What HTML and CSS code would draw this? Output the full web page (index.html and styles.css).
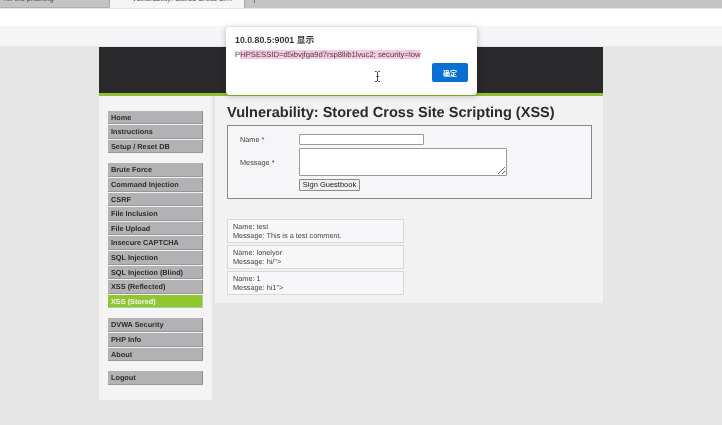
FILE: index.html
```html
<!DOCTYPE html>
<html lang="en">
<head>
    <meta charset="UTF-8">
    <title>Vulnerability: Stored Cross Site Scripting (XSS)</title>
    <link rel="stylesheet" href="styles.css">
</head>
<body>
    <div class="tab-bar">
        <div class="tab tab-other"><span class="tab-title">ror the phishing</span><span class="tab-close">×</span></div>
        <div class="tab tab-active"><span class="tab-title">Vulnerability: Stored Cross Si…</span><span class="tab-close">×</span></div>
        <div class="tab-new"></div>
    </div>
    <div class="address-bar"></div>
    <div class="bookmark-bar"></div>

    <div class="container">
        <div class="header"></div>
        <div class="columns">
            <div class="sidebar">
                <ul class="menu">
                    <li>Home</li>
                    <li>Instructions</li>
                    <li>Setup / Reset DB</li>
                </ul>
                <ul class="menu">
                    <li>Brute Force</li>
                    <li>Command Injection</li>
                    <li>CSRF</li>
                    <li>File Inclusion</li>
                    <li>File Upload</li>
                    <li>Insecure CAPTCHA</li>
                    <li>SQL Injection</li>
                    <li>SQL Injection (Blind)</li>
                    <li>XSS (Reflected)</li>
                    <li class="selected">XSS (Stored)</li>
                </ul>
                <ul class="menu">
                    <li>DVWA Security</li>
                    <li>PHP Info</li>
                    <li>About</li>
                </ul>
                <ul class="menu">
                    <li>Logout</li>
                </ul>
            </div>
            <div class="main">
                <h1>Vulnerability: Stored Cross Site Scripting (XSS)</h1>
                <div class="guestbook">
                    <div class="form-row">
                        <label class="form-label">Name *</label>
                        <input class="name-input" type="text">
                    </div>
                    <div class="form-row">
                        <label class="form-label">Message *</label>
                        <textarea class="message-input"></textarea>
                    </div>
                    <div class="form-row">
                        <span class="form-label"></span>
                        <button class="sign-button">Sign Guestbook</button>
                    </div>
                </div>
                <div class="comments">
                    <div class="comment">Name: test<br>Message: This is a test comment.</div>
                    <div class="comment">Name: lonelyor<br>Message: hi/"&gt;</div>
                    <div class="comment">Name: 1<br>Message: hi1"&gt;</div>
                </div>
            </div>
        </div>
    </div>

    <div class="alert">
        <div class="alert-title">10.0.80.5:9001 显示</div>
        <div class="alert-text">P<span class="alert-mark">HPSESSID=d5ibvjfga9d7rsp8llib1lvuc2; security=low</span></div>
        <div class="alert-actions">
            <button class="alert-ok">确定</button>
        </div>
        <svg class="cursor" width="7" height="11" viewBox="0 0 7 11">
            <path d="M1 .5h1.500l1 1 1-1H6M3.500 1.500v8M1 10.500h1.500l1-1 1 1H6M2.200 5.500h2.600" fill="none" stroke="#333" stroke-width=".9"/>
        </svg>
    </div>
</body>
</html>
```

FILE: styles.css
```css
* {
    box-sizing: border-box;
}

html, body {
    height: 100%;
}

html {
    background-color: #e6e6e6;
}

body {
    margin: 0;
    overflow: hidden;
    font-family: "Liberation Sans", Arial, sans-serif;
    color: #2b2b2b;
    text-rendering: geometricPrecision;
    filter: blur(0.4px); /* the shot is a soft video frame */
}

/* browser chrome, cut off at the top of the shot */
.tab-bar {
    display: flex;
    height: 9px;
    background-color: #c4c4c4;
    border-bottom: 1px solid #e4e4e6;
    overflow: hidden;
}

.tab {
    display: flex;
    justify-content: space-between;
    height: 8px;
    font-size: 7.200px;
    line-height: 8px;
    color: #444;
    white-space: nowrap;
    overflow: hidden;
}

.tab-other {
    width: 110px;
    padding: 0 8px 0 4px;
    border-right: 1px solid #aaa;
    border-bottom: 1px solid #b0b0b0;
    border-bottom-right-radius: 3px;
}

.tab-active {
    width: 135px;
    padding: 0 9px 0 22px;
    background-color: #f5f5f7;
    border-right: 1px solid #aaa;
}

.tab-title, .tab-close {
    display: block;
    margin-top: -5px;
    flex-shrink: 0;
}

.tab-new {
    width: 1px;
    height: 3px;
    margin-left: 9px;
    background-color: #777;
}

.address-bar {
    height: 17px;
    background-color: #fff;
}

.bookmark-bar {
    height: 20px;
    background-color: #f5f5f7;
}

.container {
    width: 504px;
    margin-left: 99px;
    margin-top: 1px;
    will-change: transform;
}

.header {
    height: 49px;
    background-color: #2a2a2c;
    border-bottom: 3px solid #8fc031;
}

.columns {
    display: flex;
    align-items: flex-start;
}

.sidebar {
    width: 113px;
    height: 304px;
    padding-top: 14.500px;
    background-color: #f4f4f4;
}

.menu {
    list-style: none;
    margin: 0 0 10.100px 9px;
    padding: 0;
    width: 95px;
}

.menu li {
    height: 13.600px;
    margin-bottom: 1px;
    padding-left: 3px;
    background-color: #b3b1b3;
    border-right: 1px solid #8f8f8f;
    border-bottom: 1px solid #97979c;
    font-size: 7.300px;
    font-weight: bold;
    line-height: 13px;
    color: #2b2b2b;
}

.menu li.selected {
    background-color: #8fc72c;
    border-color: #a8c8c0;
    color: #f4f4f4;
}

.main {
    width: 388px;
    height: 207px;
    margin-left: 3px;
    padding: 7px 11px 0 12px;
    background-color: #f2f2f2;
}

h1 {
    margin: 0 0 1px;
    font-size: 14.550px;
    line-height: 21px;
    font-weight: bold;
    color: #2b2b2b;
}

.guestbook {
    height: 74px;
    padding: 8px 0 0 12px;
    background-color: #f6f6f8;
    border: 1px solid #888;
}

.form-row {
    display: flex;
    align-items: flex-start;
    margin-bottom: 3px;
}

.form-label {
    width: 59px;
    flex-shrink: 0;
    font-size: 7.300px;
    line-height: 11px;
    color: #444;
}

.form-row:nth-child(2) .form-label {
    padding-top: 9px;
}

.name-input {
    display: block;
    width: 125px;
    height: 11px;
    padding: 0;
    background-color: #fff;
    border: 1px solid #9a9a9a;
    border-radius: 1px;
}

.message-input {
    display: block;
    width: 208px;
    height: 28px;
    padding: 0;
    background-color: #fff;
    border: 1px solid #9a9a9a;
    border-radius: 1px;
}

.sign-button {
    width: 61px;
    height: 12px;
    padding: 0;
    background-color: #efefef;
    border: 1px solid #8a8a8a;
    border-radius: 1px;
    font-family: inherit;
    font-size: 7.500px;
    line-height: 10px;
    color: #222;
}

.comments {
    margin-top: 20px;
}

.comment {
    width: 177px;
    height: 23.500px;
    margin-bottom: 2.500px;
    padding: 3px 5px 0;
    background-color: #f7f7f9;
    border: 1px solid #d8d8d8;
    font-size: 7.300px;
    line-height: 8.500px;
    color: #444;
}

/* alert dialog sits on top of the page */
.alert {
    position: absolute;
    top: 27px;
    left: 226px;
    width: 251px;
    height: 68px;
    padding: 8px 9px 0;
    background-color: #fff;
    border-radius: 4px;
    box-shadow: 0 1px 6px rgba(0, 0, 0, 0.25);
    will-change: transform;
}

.alert-title {
    font-family: "Liberation Sans", "Noto Sans CJK SC", sans-serif;
    font-size: 8.800px;
    line-height: 11px;
    font-weight: bold;
    color: #333;
}

.alert-text {
    margin-top: 4px;
    font-size: 7.700px;
    line-height: 9px;
    color: #444;
}

.alert-mark {
    background-color: #f9c8de;
}

.alert-actions {
    display: flex;
    justify-content: flex-end;
    margin-top: 4px;
}

.alert-ok {
    width: 36px;
    height: 19px;
    padding: 0;
    background-color: #0a6fd2;
    border: none;
    border-radius: 2px;
    font-family: "Noto Sans CJK SC", sans-serif;
    font-size: 7px;
    font-weight: bold;
    color: #fff;
}

.cursor {
    position: absolute;
    left: 148px;
    top: 44px;
}
```
